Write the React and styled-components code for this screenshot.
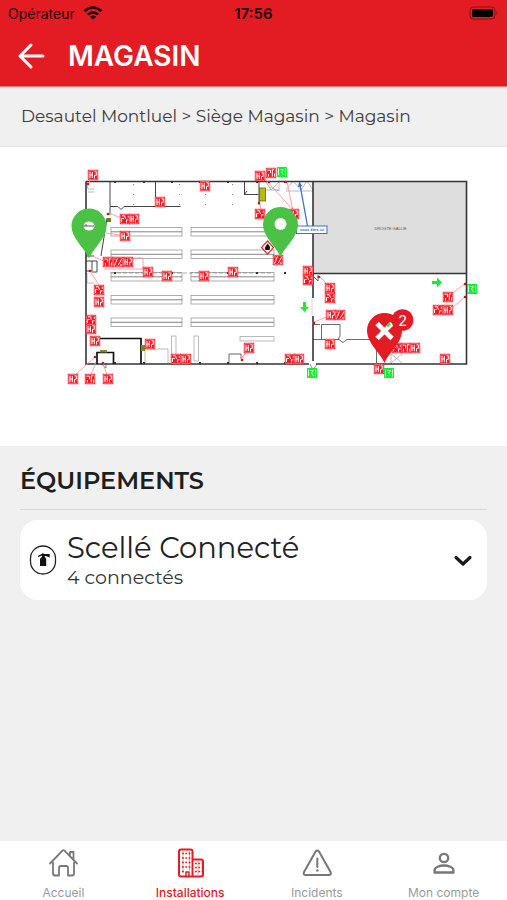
import React, { useState } from 'react'
import styled, { createGlobalStyle } from 'styled-components'

const RED = '#e31b23'
const SIGN_RED = '#fa1420'
const SIGN_GREEN = '#12f030'
const TITLE_FONT = "Montserrat, Inter, 'Liberation Sans', sans-serif"
const SYSTEM_FONT = "Inter, 'Liberation Sans', sans-serif"

const GlobalStyle = createGlobalStyle`
  * {
    box-sizing: border-box;
  }
  body {
    margin: 0;
    background-color: #f0f0f0;
    font-family: ${TITLE_FONT};
  }
`;

const Page = styled.div`
  display: flex;
  flex-direction: column;
  min-height: 100vh;
`;

const Header = styled.header`
  background-color: ${RED};
  border-bottom: 1px solid #f0757a;
`;

const StatusBar = styled.div`
  display: grid;
  grid-template-columns: 1fr auto 1fr;
  align-items: center;
  height: 26px;
  padding: 0 8px;
  color: #1c0204;
  font-family: ${SYSTEM_FONT};
  font-size: 14px;
`;

const Carrier = styled.div`
  display: flex;
  align-items: center;
  gap: 8px;
`;

const Clock = styled.time`
  font-size: 15px;
  font-weight: 600;
`;

const Battery = styled.svg`
  justify-self: end;
`;

const TitleBar = styled.div`
  display: flex;
  align-items: center;
  gap: 20px;
  height: 60px;
  padding: 0 16px;
`;

const BackButton = styled.button`
  display: flex;
  padding: 0;
  border: 0;
  background: none;
  color: #ffffff;
  cursor: pointer;
`;

const Title = styled.h1`
  margin: 0;
  color: #ffffff;
  font-family: ${SYSTEM_FONT};
  font-size: 28px;
  font-weight: 600;
  line-height: 36px;
`;

const Breadcrumb = styled.nav`
  padding: 17px 21px 18px;
  border-bottom: 1px solid #e6e6e6;
  color: #3c3c3c;
  font-size: 17px;
  line-height: 24px;
`;

const Crumb = styled.a`
  color: inherit;
  text-decoration: none;
`;

const PlanArea = styled.div`
  background-color: #ffffff;
`;

const PlanSvg = styled.svg`
  display: block;
  width: 100%;
  height: auto;
`;

const Section = styled.section`
  flex: 1;
  padding: 19px 20px 20px;
`;

const SectionTitle = styled.h2`
  margin: 0 0 10px;
  padding-bottom: 12px;
  border-bottom: 1px solid #d8d8d8;
  color: #1e1e1e;
  font-size: 24px;
  font-weight: 600;
  line-height: 32px;
`;

const EquipmentCard = styled.button`
  display: flex;
  align-items: center;
  gap: 10px;
  width: 100%;
  padding: 10px 12px 10px 9px;
  border: 0;
  border-radius: 18px;
  background-color: #ffffff;
  color: #222222;
  font-family: ${TITLE_FONT};
  text-align: left;
  cursor: pointer;
`;

const EquipmentText = styled.span`
  display: flex;
  flex: 1;
  flex-direction: column;
`;

const EquipmentName = styled.span`
  font-size: 29px;
  font-weight: 400;
  line-height: 36px;
`;

const EquipmentCount = styled.span`
  color: #333333;
  font-size: 19px;
  line-height: 24px;
`;

const TabBar = styled.nav`
  display: grid;
  grid-template-columns: repeat(4, 1fr);
  height: 59px;
  background-color: #ffffff;
`;

const Tab = styled.a`
  display: flex;
  flex-direction: column;
  align-items: center;
  gap: 6px;
  padding-top: 6px;
  color: ${({ $active }) => ($active ? RED : '#777777')};
  font-family: ${SYSTEM_FONT};
  text-decoration: none;
`;

const TabLabel = styled.span`
  color: ${({ $active }) => ($active ? RED : '#9a9a9a')};
  font-size: 12px;
  font-weight: ${({ $active }) => ($active ? 500 : 400)};
  line-height: 16px;
`;

const HomeIcon = () => (
  <svg width="32" height="32" viewBox="0 0 32 32" fill="none" stroke="currentColor" strokeWidth="1.800" strokeLinecap="round" strokeLinejoin="round">
    <path d="M6 15.500v11q0 2 2 2h4V21q0-2 2-2h5q2 0 2 2v7.500h4q2 0 2-2v-11" />
    <path d="M3 16.500L15.500 3.600q1-.9 2 0L30 16.500M23 8.500V5h3.500v7.500" />
  </svg>
)

const BuildingIcon = () => (
  <svg width="32" height="32" viewBox="0 0 32 32" fill="none" stroke="currentColor" strokeWidth="2" strokeLinejoin="round">
    <path d="M7 2.500h9.500q2 0 2 2v25H7q-2 0-2-2v-23q0-2 2-2zM18.500 12.500H27q2 0 2 2v13q0 2-2 2h-8.500" />
    <path d="M12 29v-4h3v4" strokeWidth="1.500" />
    <path d="M8 6.500h9M8 11h9M8 15.500h9M8 20h9M8 24.500h3M21 16.500h7M21 20.500h7M21 24.500h7" strokeWidth="1.600" strokeDasharray="1.800 1.500" />
    <path d="M9 4v22M15.500 4v20M24 14v14" strokeWidth=".7" opacity=".6" />
  </svg>
)

const WarningIcon = () => (
  <svg width="32" height="32" viewBox="0 0 32 32" fill="none" stroke="currentColor" strokeWidth="2" strokeLinecap="round" strokeLinejoin="round">
    <path d="M14.600 4.600q1.700-2.200 3.400 0l11.700 20.700q.8 2.700-1.900 2.700h-23q-2.700 0-1.900-2.700z" />
    <path d="M16.300 11.500v8.500" />
    <circle cx="16.300" cy="23.500" r="1.200" fill="currentColor" stroke="none" />
  </svg>
)

const AccountIcon = () => (
  <svg width="32" height="32" viewBox="0 0 32 32" fill="none" stroke="currentColor" strokeWidth="2.300">
    <circle cx="16" cy="11" r="4.200" />
    <path d="M6.600 25.500V23c0-2.700 5.200-4.500 9.400-4.500s9.400 1.800 9.400 4.500v2.500z" />
  </svg>
)

const TABS = [
  { label: 'Accueil', Icon: HomeIcon },
  { label: 'Installations', Icon: BuildingIcon, active: true },
  { label: 'Incidents', Icon: WarningIcon },
  { label: 'Mon compte', Icon: AccountIcon },
]

// [x, y, kind] of the safety signs, by their centre
const SIGNS = [
  [93, 175, 'ext'], [160, 202, 'ext'], [205, 186, 'ext'],
  [260, 176, 'ext'], [271, 173, 'hose'], [260, 214, 'alarm'], [294, 214, 'ext'],
  [125, 219, 'alarm'], [134, 219, 'ext'], [125, 236, 'ext'],
  [108, 262, 'hose'], [118, 262, 'stairs'], [128, 262, 'ext'],
  [148, 272, 'ext'], [167, 276, 'ext'], [233, 272, 'ext'], [204, 276, 'ext'],
  [278, 260, 'stairs'], [308, 271, 'ext'], [308, 280, 'alarm'],
  [99, 290, 'alarm'], [99, 302, 'ext'], [91, 320, 'alarm'], [91, 329, 'ext'],
  [95, 341, 'ext'], [150, 344, 'ext'],
  [73, 379, 'ext'], [90, 379, 'hose'], [108, 379, 'ext'],
  [176, 359, 'alarm'], [186, 359, 'ext'], [249, 348, 'ext'],
  [290, 359, 'alarm'], [299, 359, 'ext'],
  [330, 288, 'ext'], [330, 298, 'alarm'], [331, 315, 'ext'], [340, 315, 'stairs'],
  [330, 344, 'ext'], [397, 348, 'alarm'], [406, 348, 'hose'], [415, 348, 'ext'],
  [379, 369, 'ext'], [445, 359, 'ext'], [448, 297, 'hose'],
  [438, 310, 'alarm'], [448, 310, 'ext'],
]

const EXITS = [[282, 172], [312, 373], [389, 373], [472, 289]]

const SHELVES = [227.5, 250, 272.5, 295.5, 318]

// thin pink leaders from a sign to its spot on the wall
const LEADERS = [
  'M87 185l5-7M109 213l12 5M106 233l14 2M92 256l12 5v-3h39v11h-39',
  'M90 271l9 14M75 375l20-18M91 375l5-13M107 375l-4-12M254 344l-13 14M246 352l-4 7',
  'M264 178l31 34M287 182l6 29M260 204l1 7M312 323l14-6M320 277l9 9M465 284l-14 10M465 297l-13 11',
]

const GLYPHS = {
  ext: 'M-3-3.200v6.400M-3.500 0h3M-.7-3.200v6.400M1.500 3.500V.3h1.800v-3.500h-1.800',
  alarm: 'M-3.500 3v-3.500h2.500M-3-3.200h2.500l1 3M1.500 3.500V.8h2M3.300-3.200v2',
  hose: 'M-3.500-2.800h3v3M-2.500 3.500V1M1.300 3.500v-6.700h2M3.500 .5v3',
  stairs: 'M-3.500 3.500l3-7M0 3.500l4-7M-3.500-3h1M2 3h2',
}

const Sign = ({ x, y, kind }) => (
  <g transform={`translate(${x} ${y})`}>
    <rect x="-5.200" y="-5.200" width="10.400" height="10.400" fill={SIGN_RED} />
    <rect x="-4.200" y="-4.200" width="8.400" height="8.400" fill="none" stroke="#ffffff" strokeWidth=".5" opacity=".7" />
    <path d={GLYPHS[kind]} fill="none" stroke="#ffffff" strokeWidth="1" />
  </g>
)

const Exit = ({ x, y }) => (
  <g transform={`translate(${x} ${y})`}>
    <rect x="-5" y="-5" width="10" height="10" fill={SIGN_GREEN} />
    <path d="M-3.500-3.500v7M3.500-3.500v7M-1.500-2.500h3l-2 2.500 2 3" fill="none" stroke="#ffffff" strokeWidth=".8" />
  </g>
)

const PIN_PATH = 'M0 25C-4 15-17.500 5-17.500-7.500a17.500 17.500 0 0 1 35 0C17.500 5 4 15 0 25z'

const FloorPlan = () => (
  <PlanSvg viewBox="0 147 507 299" role="img" aria-label="Plan du magasin">
    <rect x="313" y="181.500" width="153" height="92" fill="#dedede" />

    {SHELVES.map(y => (
      <g key={y} fill="none" stroke="#999999" strokeWidth=".8">
        <rect x="111" y={y} width="71" height="8.500" />
        <path d={`M111 ${y + 4.300}h71M191 ${y + 4.300}h83`} stroke="#666666" />
        <rect x="191" y={y} width="83" height="8.500" />
      </g>
    ))}
    <g fill="none" stroke="#aaaaaa" strokeWidth=".8">
      <rect x="171.500" y="336" width="4.500" height="25" />
      <rect x="194" y="336" width="4.500" height="25" />
      <rect x="240" y="336.500" width="34" height="4.500" />
      <path d="M87 273v10h7M145 363v-14h23v14M86 181l2 8h6M88 192h6" />
      <path d="M266 182l5 8 8-8v9l-10-4M286 190l7-9 8 9 6-9 6 9M266 190h13M286 191h27" />
      <path d="M391 354l11 9M402 354l-11 9M391 354v10" />
    </g>

    <g fill="none" stroke="#444444" strokeWidth="1">
      <path d="M110 181v25.500h8l3 3 3-3h56.500M155.500 181v25.500M110 207v8M107 218l-6 38M86 256h8M86 261h6v10h-6M92 261h5v11h-5" />
      <path d="M244.500 181v13.500h14M259 181v24M247 191l-3 4" />
      <path d="M229 363v-9h12v5M321.500 339V324.500h18.500V336l-2 3.500M313 324.500h7M313 339.500h26l4 3 4-3h29M376.500 340v23M318 275v6l-4-4" strokeWidth=".8" />
      <path d="M106 363v5l-5-4M310 364l3 6 4-6" strokeWidth=".6" />
    </g>
    <path d="M86 181.500h380.500v182.500H316M309 364H86V181.500M313 181v180M313 273.500h153.500" fill="none" stroke="#353535" strokeWidth="1.600" />
    <path d="M98 338.500h43v25.500M97 364v-11.500h16.500V364" fill="none" stroke="#111111" strokeWidth="1.700" />
    <path d="M111 273h162" fill="none" stroke="#777777" strokeWidth=".6" strokeDasharray="4 2" />
    <g fill="#333333">
      {[115, 144, 172, 200, 228, 257, 285].map(x => (
        <g key={x}>
          <rect x={x - 1} y="181" width="2" height="2" />
          <rect x={x - 1} y="272" width="2" height="2" />
          <rect x={x - 1} y="362" width="2" height="2" />
        </g>
      ))}
      {[133, 179, 205, 232].map(x => (
        <g key={x} opacity=".6">
          <rect x={x} y="184" width="1" height="1" />
          <rect x={x} y="194" width="1" height="1" />
          <rect x={x} y="204" width="1" height="1" />
        </g>
      ))}
    </g>
    <path d="M313 298v18" stroke="#ffffff" strokeWidth="2" />
    <path d="M312 298v18" stroke="#bbbbbb" strokeWidth=".6" />

    <rect x="259.500" y="188" width="6" height="13" fill="#b3bd10" stroke="#666600" strokeWidth=".8" />
    <rect x="107" y="218" width="4" height="4" fill="#6d7d12" />
    <rect x="100" y="350" width="7" height="2.500" fill="#80881c" />
    <rect x="141" y="345" width="4" height="6" fill="#80881c" />

    {LEADERS.map(d => (
      <path key={d} d={d} fill="none" stroke="#ff8c96" strokeWidth=".8" />
    ))}
    <g fill="#d0101c">
      {[[88, 184], [108, 214], [90, 271], [95, 357], [103, 363], [242, 360], [269, 182], [286, 182], [314, 323], [319, 277], [465, 284], [465, 297], [259, 203]].map(([x, y]) => (
        <circle key={`${x}-${y}`} cx={x} cy={y} r="1.300" />
      ))}
    </g>

    {SIGNS.map(([x, y, kind]) => <Sign key={`${x}-${y}`} x={x} y={y} kind={kind} />)}
    {EXITS.map(([x, y]) => <Exit key={`${x}-${y}`} x={x} y={y} />)}

    <g fill={SIGN_GREEN}>
      <path d="M432 281h5v-3.500l5 5-5 5V284h-5z" />
      <path d="M303 302h3v5h3l-4.500 5-4.500-5h3z" />
    </g>

    <path d="M299.500 182l8 44" stroke="#3c6fc8" strokeWidth="1.300" />
    <path d="M298 187l1-5 3.500 4z" fill="#3c6fc8" />
    <rect x="296.500" y="226" width="30.500" height="7.500" fill="#ffffff" stroke="#3c6fc8" />
    <text x="312" y="231.300" textAnchor="middle" fontFamily="Liberation Sans, sans-serif" fontSize="4" fontWeight="700" fill="#3c6fc8">vous êtes ici</text>
    <text x="390.500" y="229.500" textAnchor="middle" fontFamily="Liberation Sans, sans-serif" fontSize="4" fill="#555555">DROGTE GALLIE</text>

    <path d="M267.500 241l6 6.500-6 6.500-6-6.500z" fill="#ffffff" stroke="#e03030" strokeWidth="1.200" />
    <path d="M267.500 243.500c3 3 3 4 2 6.500h-4c-1.500-2.500 0-3 2-6.500z" fill="#111111" />

    <g transform="translate(89 233.500)">
      <path d={PIN_PATH} fill="#4bc246" />
      <path d="M-5.500-7.500a5.500 4.500 0 0 1 11 0a5.500 4.500 0 0 1-11 0z" fill="#ffffff" />
      <path d="M-6-7.500H5M-3-9.500v2" stroke="#444444" strokeWidth=".9" />
    </g>
    <g transform="translate(280.500 232)">
      <path d={PIN_PATH} fill="#4bc246" />
      <circle cy="-8" r="6" fill="#ffffff" />
    </g>
    <g transform="translate(384.500 338)">
      <path d={PIN_PATH} fill={RED} />
      <path d="M-7.500-14.500L7.500 .5M7.500-14.500L-7.500 .5" stroke="#ffffff" strokeWidth="4.800" />
      <path d="M1.500-12l3-3 2 1-3 3z" fill={SIGN_GREEN} />
    </g>
    <circle cx="402.500" cy="320" r="10.800" fill={RED} />
    <text x="402.500" y="325.500" textAnchor="middle" fontFamily="Inter, sans-serif" fontSize="15" fill="#ffffff">2</text>
  </PlanSvg>
)

const ExtinguisherIcon = () => (
  <svg width="28" height="32" viewBox="0 0 28 32" fill="none">
    <rect x="1.500" y="2" width="25" height="28" rx="12.500" stroke="#222222" strokeWidth="1.300" />
    <path d="M11 15.500q0-2 2-2.500v-1.500l-3.500 1.500-.8-1 4-2 1-1 1.500 1h5.500v3.500l-4-1.500h-1v1q1.500.5 1.500 2.500v6.500h-6.200z" fill="#111111" />
  </svg>
)

export default function App() {
  const [open, setOpen] = useState(false)

  return (
    <Page>
      <GlobalStyle />
      <Header>
        <StatusBar>
          <Carrier>
            Opérateur
            <svg width="20" height="14" viewBox="0 0 20 14" fill="none" stroke="#1c0204" strokeWidth="2.600" aria-hidden="true">
              <path d="M1.500 5.300q8.500-7.600 17 0M4.800 8.600q5.200-4.600 10.400 0" />
              <path d="M10 13.500L6.900 10.700q3.100-2.300 6.200 0z" fill="#1c0204" stroke="none" />
            </svg>
          </Carrier>
          <Clock>17:56</Clock>
          <Battery width="30" height="14" viewBox="0 0 30 14" aria-hidden="true">
            <rect x="1" y="1" width="25" height="12" rx="3.500" fill="none" stroke="#8a1016" />
            <rect x="3" y="3" width="21" height="8" rx="1.500" fill="#000000" />
            <path d="M27.500 5q2 2 0 4z" fill="#8a1016" />
          </Battery>
        </StatusBar>
        <TitleBar>
          <BackButton type="button" aria-label="Retour">
            <svg width="32" height="32" viewBox="0 0 32 32" fill="none" stroke="currentColor" strokeWidth="3" strokeLinecap="round" strokeLinejoin="round">
              <path d="M27 16H4M15 5L4 16l11 11" />
            </svg>
          </BackButton>
          <Title>MAGASIN</Title>
        </TitleBar>
      </Header>

      <Breadcrumb aria-label="Fil d'Ariane">
        <Crumb href="#montluel">Desautel Montluel</Crumb>
        {' > '}
        <Crumb href="#siege">Siège Magasin</Crumb>
        {' > '}
        <Crumb href="#magasin">Magasin</Crumb>
      </Breadcrumb>

      <PlanArea>
        <FloorPlan />
      </PlanArea>

      <Section>
        <SectionTitle>ÉQUIPEMENTS</SectionTitle>
        <EquipmentCard type="button" aria-expanded={open} onClick={() => setOpen(!open)}>
          <ExtinguisherIcon />
          <EquipmentText>
            <EquipmentName>Scellé Connecté</EquipmentName>
            <EquipmentCount>4 connectés</EquipmentCount>
          </EquipmentText>
          <svg width="24" height="24" viewBox="0 0 24 24" fill="none" stroke="#1a1a1a" strokeWidth="3.200" strokeLinecap="round" strokeLinejoin="round" aria-hidden="true">
            <path d={open ? 'M5 16L12 9l7 7' : 'M5 9.500L12 16l7-6.500'} />
          </svg>
        </EquipmentCard>
      </Section>

      <TabBar>
        {TABS.map(({ label, Icon, active }) => (
          <Tab key={label} href={`#${label}`} $active={active}>
            <Icon />
            <TabLabel $active={active}>{label}</TabLabel>
          </Tab>
        ))}
      </TabBar>
    </Page>
  )
}
